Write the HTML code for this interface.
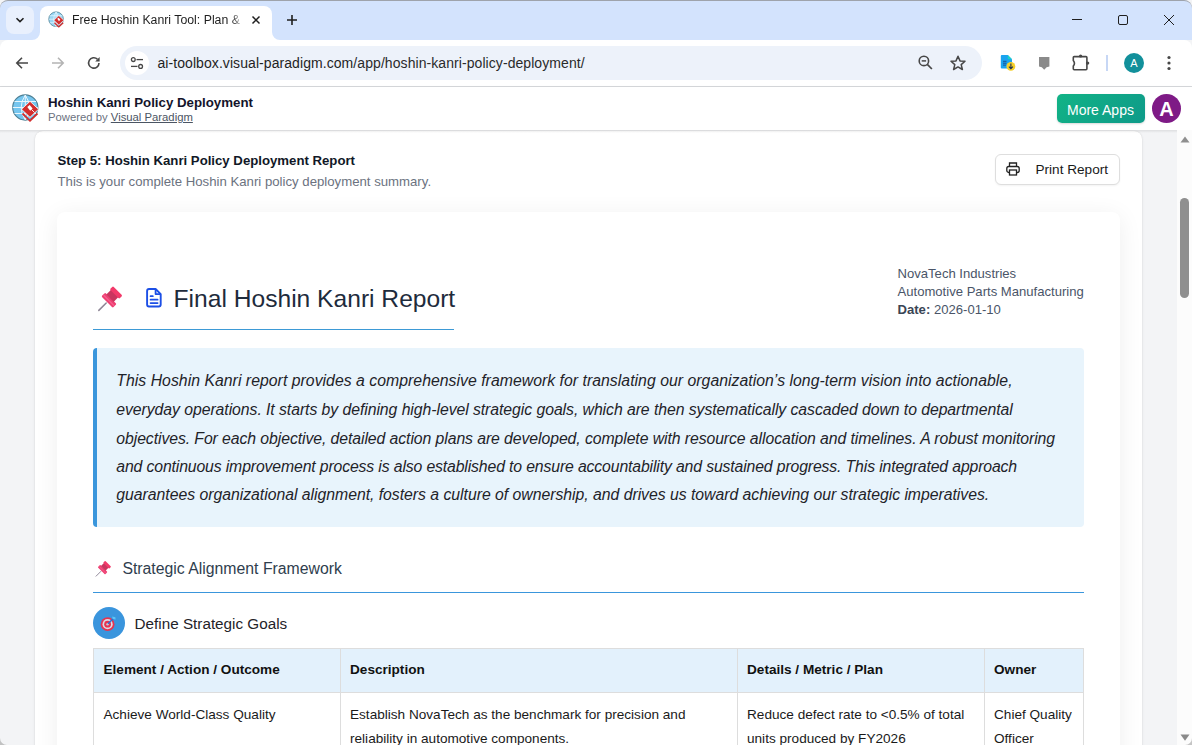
<!DOCTYPE html>
<html><head><meta charset="utf-8">
<style>
*{box-sizing:border-box;margin:0;padding:0}
html,body{width:1192px;height:745px;overflow:hidden;background:#f3f4f6;font-family:"Liberation Sans",sans-serif;position:relative}
.abs{position:absolute}
.t{position:absolute;white-space:nowrap;line-height:1}
/* chrome */
#strip{left:0;top:0;width:1192px;height:40px;background:#d3e3fd;border-top:1px solid #9ea3ab;border-radius:8px 8px 0 0}
#toolbar{left:0;top:40px;width:1192px;height:47px;background:#fff;border-bottom:1px solid #d7d9dc;border-radius:8px 8px 0 0}
#omni{left:120px;top:46px;width:862px;height:34px;background:#edf2fa;border-radius:17px}
#apphdr{left:0;top:87px;width:1192px;height:43px;background:#fff;box-shadow:0 1px 3px rgba(0,0,0,.10)}
#page{left:0;top:130px;width:1177px;height:615px;background:#f3f4f6;overflow:hidden}
#scroll{left:1177px;top:130px;width:15px;height:615px;background:#fcfcfc}
#outer{left:35px;top:1px;width:1107px;height:800px;background:#fff;border-radius:8px;box-shadow:0 1px 3px rgba(0,0,0,.1),0 0 1px rgba(0,0,0,.12)}
#inner{left:22px;top:81px;width:1063px;height:700px;background:#fff;border-radius:8px;box-shadow:0 4px 24px rgba(0,0,0,.07)}
</style></head>
<body>
<div id="strip" class="abs"></div>
<div id="toolbar" class="abs"></div>
<div id="omni" class="abs"></div>

<!-- tab dropdown -->
<div class="abs" style="left:6px;top:6px;width:28px;height:28px;background:#e9f0fd;border-radius:8px"></div>
<svg class="abs" style="left:14px;top:14px" width="12" height="12" viewBox="0 0 12 12"><path d="M2.5 4.2 L6 7.6 L9.5 4.2" fill="none" stroke="#1f1f1f" stroke-width="1.6"/></svg>
<!-- active tab -->
<div class="abs" style="left:40px;top:6px;width:232px;height:35px;background:#fff;border-radius:8px 8px 0 0"></div>
<svg class="abs" style="left:32px;top:32px" width="8" height="8" viewBox="0 0 8 8"><path d="M8 0 V8 H0 A8 8 0 0 0 8 0Z" fill="#fff"/></svg>
<svg class="abs" style="left:272px;top:32px" width="8" height="8" viewBox="0 0 8 8"><path d="M0 0 V8 H8 A8 8 0 0 1 0 0Z" fill="#fff"/></svg>
<!-- favicon -->
<svg class="abs" style="left:45.6px;top:9.3px" width="21" height="21" viewBox="0 0 36 36">
 <circle cx="17.3" cy="17.5" r="12.6" fill="#9ad6f3" stroke="#4d7f93" stroke-width="1.3"/>
 <path d="M4.8 17.5 H29.8 M6.5 11.5 H28 M6.5 23.5 H28 M17.3 5 V30 M17.3 5 Q9 17.5 17.3 30 M17.3 5 Q25.6 17.5 17.3 30" stroke="#e8f6fd" stroke-width="1.2" fill="none"/>
 <path d="M13.5 19.3 L22 11.3 L30.5 19.3 L22 27.3Z" fill="#d32d2d" stroke="#fff" stroke-width="1"/>
 <path d="M14.5 23.5 L22 30.8 L29.5 23.5" fill="none" stroke="#d32d2d" stroke-width="2.2"/>
 <path d="M19.3 16.9 L21.7 15 L24.6 18.4 L22.2 20.8Z" fill="#fff"/>
</svg>
<div class="t" style="left:72px;top:13.7px;font-size:12.3px;color:#1f1f1f;width:172px;overflow:hidden;-webkit-mask-image:linear-gradient(90deg,#000 160px,transparent 172px)">Free Hoshin Kanri Tool: Plan &amp; Execute</div>
<svg class="abs" style="left:251px;top:15px" width="10" height="10" viewBox="0 0 10 10"><path d="M1.5 1.5 L8.5 8.5 M8.5 1.5 L1.5 8.5" stroke="#1f1f1f" stroke-width="1.5"/></svg>
<svg class="abs" style="left:286px;top:14px" width="12" height="12" viewBox="0 0 12 12"><path d="M6 1 V11 M1 6 H11" stroke="#1f1f1f" stroke-width="1.6"/></svg>
<!-- window controls -->
<div class="abs" style="left:1072px;top:18.5px;width:10px;height:1px;background:#1f1f1f"></div>
<div class="abs" style="left:1118px;top:15px;width:10px;height:10px;border:1px solid #1f1f1f;border-radius:2px"></div>
<svg class="abs" style="left:1163px;top:14px" width="12" height="12" viewBox="0 0 12 12"><path d="M1 1 L11 11 M11 1 L1 11" stroke="#1f1f1f" stroke-width="1"/></svg>
<!-- nav buttons -->
<svg class="abs" style="left:14px;top:55px" width="16" height="16" viewBox="0 0 16 16"><path d="M14 8 H3 M8 2.8 L2.8 8 L8 13.2" fill="none" stroke="#474747" stroke-width="1.6"/></svg>
<svg class="abs" style="left:50px;top:55px" width="16" height="16" viewBox="0 0 16 16"><path d="M2 8 H13 M8 2.8 L13.2 8 L8 13.2" fill="none" stroke="#b4b4b4" stroke-width="1.6"/></svg>
<svg class="abs" style="left:86px;top:55px" width="16" height="16" viewBox="0 0 16 16"><path d="M13 8 A5.2 5.2 0 1 1 11.4 4.2" fill="none" stroke="#474747" stroke-width="1.6"/><path d="M13.6 2 V6.4 H9.2Z" fill="#474747"/></svg>
<!-- site info -->
<div class="abs" style="left:125px;top:51px;width:24px;height:24px;background:#fff;border-radius:12px"></div>
<svg class="abs" style="left:129px;top:55px" width="16" height="16" viewBox="0 0 16 16"><circle cx="4.3" cy="4.6" r="1.9" fill="none" stroke="#474747" stroke-width="1.3"/><path d="M7.5 4.6 H14" stroke="#474747" stroke-width="1.3"/><circle cx="11.6" cy="11.4" r="1.9" fill="none" stroke="#474747" stroke-width="1.3"/><path d="M2 11.4 H8.5" stroke="#474747" stroke-width="1.3"/></svg>
<div class="t" style="left:157.5px;top:56px;font-size:14px;color:#1f1f1f;letter-spacing:0.07px">ai-toolbox.visual-paradigm.com<span style="color:#2a2a2a">/app/hoshin-kanri-policy-deployment/</span></div>
<!-- zoom, star -->
<svg class="abs" style="left:917px;top:55px" width="17" height="17" viewBox="0 0 17 17"><circle cx="6.9" cy="5.9" r="4.7" fill="none" stroke="#474747" stroke-width="1.6"/><path d="M4.7 5.9 H9.1" stroke="#474747" stroke-width="1.5"/><path d="M10.3 9.4 L14.9 14" stroke="#474747" stroke-width="1.7"/></svg>
<svg class="abs" style="left:949px;top:54px" width="18" height="18" viewBox="0 0 18 18"><path d="M9 2.2 L11 6.9 L16 7.3 L12.2 10.6 L13.4 15.5 L9 12.9 L4.6 15.5 L5.8 10.6 L2 7.3 L7 6.9Z" fill="none" stroke="#474747" stroke-width="1.5" stroke-linejoin="round"/></svg>
<!-- extensions -->
<svg class="abs" style="left:995px;top:50px" width="22" height="24" viewBox="0 0 22 24"><path d="M6.8 5 H12.8 L17 9.2 V17.5 Q17 18.5 16 18.5 H6.8 Q5.8 18.5 5.8 17.5 V6 Q5.8 5 6.8 5Z" fill="#1aa3ef"/><path d="M12.8 5 L17 9.2 H12.8Z" fill="#19d3c5"/><path d="M8 11.3 H11.5 M8 13.2 H11.5 M8 15.1 H11" stroke="#174a8a" stroke-width="0.9"/><circle cx="15.9" cy="16.4" r="4.4" fill="#f6d02a"/><path d="M15.9 13.4 V18.6 M13.9 16.6 L15.9 18.7 L17.9 16.6" fill="none" stroke="#1f3253" stroke-width="1.1"/></svg>
<svg class="abs" style="left:1036px;top:54px" width="16" height="18" viewBox="0 0 16 18"><path d="M3 3 H13.4 V12.6 L10.6 13.2 L8.2 15.8 L5.8 13.2 L3 12.6Z" fill="#8a8a8a"/></svg>
<svg class="abs" style="left:1070px;top:52px" width="22" height="20" viewBox="0 0 22 20"><path d="M4.2 4.6 H16 Q16.9 4.6 16.9 5.5 V16.8 Q16.9 17.7 16 17.7 H4.2 Q3.3 17.7 3.3 16.8 V14 Q5.6 11.2 3.3 8.4 V5.5 Q3.3 4.6 4.2 4.6Z" fill="none" stroke="#474747" stroke-width="1.6" stroke-linejoin="round"/><circle cx="10.6" cy="4" r="1.6" fill="#474747"/><circle cx="17.6" cy="11.1" r="1.7" fill="#474747"/></svg>
<div class="abs" style="left:1106px;top:55px;width:2px;height:16px;background:#c7d7f5"></div>
<div class="abs" style="left:1124px;top:53px;width:20px;height:20px;border-radius:10px;background:#12909b;color:#fff;font-size:11px;line-height:20px;text-align:center">A</div>
<svg class="abs" style="left:1165px;top:55px" width="8" height="16" viewBox="0 0 8 16"><circle cx="4" cy="2.5" r="1.6" fill="#474747"/><circle cx="4" cy="8" r="1.6" fill="#474747"/><circle cx="4" cy="13.5" r="1.6" fill="#474747"/></svg>

<div id="apphdr" class="abs"></div>

<!-- app header content -->
<svg class="abs" style="left:8px;top:90px" width="36" height="36" viewBox="0 0 36 36">
 <circle cx="17.3" cy="17.5" r="12.6" fill="#76c6ef" stroke="#4d7f93" stroke-width="1.1"/>
 <path d="M4.8 17.5 H29.8 M6.5 11.5 H28 M6.5 23.5 H28 M17.3 5 V30 M17.3 5 Q9 17.5 17.3 30 M17.3 5 Q25.6 17.5 17.3 30" stroke="#e8f6fd" stroke-width="1" fill="none"/>
 <path d="M13.5 19.3 L22 11.3 L30.5 19.3 L22 27.3Z" fill="#d32d2d" stroke="#fff" stroke-width="0.8"/>
 <path d="M14.5 23.5 L22 30.8 L29.5 23.5" fill="none" stroke="#d32d2d" stroke-width="1.8"/>
 <path d="M19.3 16.9 L21.7 15 L24.6 18.4 L22.2 20.8Z" fill="#fff"/>
 <path d="M23.5 19.5 L26.5 22.5" stroke="#fff" stroke-width="0.9"/>
</svg>
<div class="t" style="left:48px;top:95.57px;font-size:13.27px;font-weight:bold;color:#14142b">Hoshin Kanri Policy Deployment</div>
<div class="t" style="left:48px;top:112px;font-size:11.3px;color:#6b7280">Powered by <span style="text-decoration:underline;color:#4b5563">Visual Paradigm</span></div>
<div class="abs" style="left:1057px;top:94px;width:88px;height:29px;border-radius:5px;background:linear-gradient(135deg,#12b386,#0e9a89);box-shadow:0 1px 2px rgba(0,0,0,.15)"></div>
<div class="t" style="left:1067px;top:102.8px;font-size:14px;color:#fff">More Apps</div>
<div class="abs" style="left:1152px;top:94px;width:29px;height:29px;border-radius:50%;background:#7e1a86;color:#fff;font-weight:bold;font-size:20px;line-height:30px;text-align:center">A</div>

<div id="page" class="abs">
  <div id="outer" class="abs">
    <div class="t" style="left:22.5px;top:23px;font-size:13.2px;font-weight:bold;color:#111827">Step 5: Hoshin Kanri Policy Deployment Report</div>
    <div class="t" style="left:22.5px;top:43.8px;font-size:13.2px;color:#6b7280">This is your complete Hoshin Kanri policy deployment summary.</div>
    <div class="abs" style="left:959.5px;top:22.5px;width:125px;height:31px;border:1px solid #dedede;border-radius:6px;background:#fff;box-shadow:0 1px 2px rgba(0,0,0,.05)"></div>
    <svg class="abs" style="left:970px;top:30px" width="16" height="16" viewBox="0 0 16 16"><path d="M4.5 5.5 V2 H11.5 V5.5" fill="none" stroke="#222" stroke-width="1.3"/><rect x="1.8" y="5.5" width="12.4" height="6" rx="2" fill="none" stroke="#222" stroke-width="1.3"/><rect x="4.5" y="9" width="7" height="5" fill="#fff" stroke="#222" stroke-width="1.3"/></svg>
    <div class="t" style="left:1000.5px;top:31.7px;font-size:13.6px;color:#1a1a1a">Print Report</div>

    <div id="inner" class="abs">
    <svg class="abs" style="left:37px;top:70px" width="34" height="34" viewBox="0 0 34 34"><g transform="scale(1)">
 <path d="M4.8 28.4 L12.2 21" stroke="#8d8595" stroke-width="1.5" stroke-linecap="round"/>
 <path d="M8.2 13.6 L10.4 11.4 Q11.2 10.6 12 11.4 L21.8 21.2 Q22.6 22 21.8 22.8 L19.6 25 Q18.8 25.8 18 25 L8.2 15.2 Q7.4 14.4 8.2 13.6Z" fill="#ee3f72"/>
 <path d="M12.3 12.6 L17.6 7.3 L24.9 14.6 L19.6 19.9Z" fill="#c9365f"/>
 <path d="M16.6 6.6 L18.2 5 Q19 4.2 19.8 5 L27.6 12.8 Q28.4 13.6 27.6 14.4 L26 16 Q25.2 16.8 24.4 16 L16.6 8.2 Q15.8 7.4 16.6 6.6Z" fill="#f23a6a"/>
 <path d="M10 13.5 L19.8 23.3" stroke="#f8709a" stroke-width="1.2" stroke-linecap="round" opacity=".7"/>
</g></svg>
    <svg class="abs" style="left:87px;top:74px" width="20" height="24" viewBox="0 0 20 24">
      <path d="M5 3 H11.6 L16.7 8.1 V18.5 Q16.7 20.5 14.7 20.5 H5 Q3.1 20.5 3.1 18.5 V5 Q3.1 3 5 3Z" fill="none" stroke="#1c4fe6" stroke-width="1.9" stroke-linejoin="round"/>
      <path d="M11.6 3.1 V8.1 H16.6" fill="none" stroke="#1c4fe6" stroke-width="1.8" stroke-linejoin="round"/>
      <path d="M6.6 10.2 H8.8 M6.6 13.7 H13.6 M6.6 17.1 H13.6" stroke="#1c4fe6" stroke-width="1.8" stroke-linecap="round"/>
    </svg>
    <div class="t" style="left:116.6px;top:74.78px;font-size:24.6px;color:#1e2b3c">Final Hoshin Kanri Report</div>
    <div class="abs" style="left:36px;top:116.5px;width:361px;height:1.5px;background:#3d9ad6"></div>
    <div class="t" style="left:840.5px;font-size:13.1px;color:#4a5568;line-height:18px;top:53.2px">NovaTech Industries<br>Automotive Parts Manufacturing<br><b style="color:#3a4555">Date:</b> 2026-01-10</div>
    <div class="abs" style="left:36px;top:136px;width:991px;height:179px;background:#e8f4fc;border-left:4px solid #3a96dc;border-radius:4px"></div>
    <div class="t" style="left:59.3px;top:161.23px;font-size:15.8px;font-style:italic;color:#1f2329;letter-spacing:0.028px">This Hoshin Kanri report provides a comprehensive framework for translating our organization’s long-term vision into actionable,</div>
    <div class="t" style="left:59.3px;top:190.43px;font-size:15.8px;font-style:italic;color:#1f2329;letter-spacing:-0.062px">everyday operations. It starts by defining high-level strategic goals, which are then systematically cascaded down to departmental</div>
    <div class="t" style="left:59.3px;top:218.53px;font-size:15.8px;font-style:italic;color:#1f2329;letter-spacing:-0.081px">objectives. For each objective, detailed action plans are developed, complete with resource allocation and timelines. A robust monitoring</div>
    <div class="t" style="left:59.3px;top:247.43px;font-size:15.8px;font-style:italic;color:#1f2329;letter-spacing:-0.139px">and continuous improvement process is also established to ensure accountability and sustained progress. This integrated approach</div>
    <div class="t" style="left:59.3px;top:275.33px;font-size:15.8px;font-style:italic;color:#1f2329;letter-spacing:-0.027px">guarantees organizational alignment, fosters a culture of ownership, and drives us toward achieving our strategic imperatives.</div>
    
    <svg class="abs" style="left:36.2px;top:346px" width="22" height="22" viewBox="0 0 22 22"><g transform="scale(0.64)">
 <path d="M4.8 28.4 L12.2 21" stroke="#8d8595" stroke-width="1.5" stroke-linecap="round"/>
 <path d="M8.2 13.6 L10.4 11.4 Q11.2 10.6 12 11.4 L21.8 21.2 Q22.6 22 21.8 22.8 L19.6 25 Q18.8 25.8 18 25 L8.2 15.2 Q7.4 14.4 8.2 13.6Z" fill="#ee3f72"/>
 <path d="M12.3 12.6 L17.6 7.3 L24.9 14.6 L19.6 19.9Z" fill="#c9365f"/>
 <path d="M16.6 6.6 L18.2 5 Q19 4.2 19.8 5 L27.6 12.8 Q28.4 13.6 27.6 14.4 L26 16 Q25.2 16.8 24.4 16 L16.6 8.2 Q15.8 7.4 16.6 6.6Z" fill="#f23a6a"/>
 <path d="M10 13.5 L19.8 23.3" stroke="#f8709a" stroke-width="1.2" stroke-linecap="round" opacity=".7"/>
</g></svg>
    <div class="t" style="left:65.4px;top:348.9px;font-size:15.8px;color:#2f3e4e">Strategic Alignment Framework</div>
    <div class="abs" style="left:36px;top:380px;width:991px;height:1px;background:#3a96dc"></div>
    <div class="abs" style="left:36px;top:395px;width:32px;height:32px;border-radius:50%;background:#3a95dd"></div>
    <svg class="abs" style="left:43px;top:402px" width="18" height="18" viewBox="0 0 18 18">
      <circle cx="7.6" cy="10.2" r="6.9" fill="#e8334f"/><circle cx="7.6" cy="10.2" r="5.1" fill="#d9dce6"/><circle cx="7.6" cy="10.2" r="3.4" fill="#e8334f"/><circle cx="7.6" cy="10.2" r="1.3" fill="#c7cad3"/>
      <path d="M8 9.8 L13.6 4.2" stroke="#2c6fd6" stroke-width="1.5"/><path d="M12.2 2.4 L12.6 5 L15.6 5.4 L15.4 3.2Z" fill="#5cc6f5"/>
    </svg>
    <div class="t" style="left:77.6px;top:403.59px;font-size:15.25px;color:#1f2329">Define Strategic Goals</div>

    <div class="abs" style="left:36px;top:436px;width:991px;height:45px;background:#e3f1fc"></div>
    <div class="abs" style="left:36px;top:436px;width:991px;height:1px;background:#dddddd"></div>
    <div class="abs" style="left:36px;top:480px;width:991px;height:1px;background:#dddddd"></div>
    <div class="abs" style="left:36px;top:436px;width:1px;height:200px;background:#dddddd"></div>
    <div class="abs" style="left:283px;top:436px;width:1px;height:200px;background:#dddddd"></div>
    <div class="abs" style="left:680px;top:436px;width:1px;height:200px;background:#dddddd"></div>
    <div class="abs" style="left:927px;top:436px;width:1px;height:200px;background:#dddddd"></div>
    <div class="abs" style="left:1026px;top:436px;width:1px;height:200px;background:#dddddd"></div>
    <div class="t" style="left:46.5px;top:451.49px;font-size:13.6px;font-weight:bold;color:#111">Element / Action / Outcome</div>
    <div class="t" style="left:293px;top:451.49px;font-size:13.6px;font-weight:bold;color:#111">Description</div>
    <div class="t" style="left:690px;top:451.49px;font-size:13.6px;font-weight:bold;color:#111">Details / Metric / Plan</div>
    <div class="t" style="left:937px;top:451.49px;font-size:13.6px;font-weight:bold;color:#111">Owner</div>
    <div class="t" style="left:46.5px;top:490.5px;font-size:13.6px;color:#1a1a1a;line-height:24px">Achieve World-Class Quality</div>
    <div class="t" style="left:293px;top:490.5px;font-size:13.6px;color:#1a1a1a;line-height:24px">Establish NovaTech as the benchmark for precision and<br>reliability in automotive components.</div>
    <div class="t" style="left:690px;top:490.5px;font-size:13.6px;color:#1a1a1a;line-height:24px">Reduce defect rate to &lt;0.5% of total<br>units produced by FY2026</div>
    <div class="t" style="left:937px;top:490.5px;font-size:13.6px;color:#1a1a1a;line-height:24px">Chief Quality<br>Officer</div>
    </div>
  </div>
</div>
<div class="abs" style="left:0;top:130px;width:1192px;height:3px;background:linear-gradient(rgba(0,0,0,.09),rgba(0,0,0,0))"></div>
<div id="scroll" class="abs"></div>
<svg class="abs" style="left:1179px;top:134px" width="12" height="10" viewBox="0 0 12 10"><path d="M1.5 8.5 L6 2.5 L10.5 8.5Z" fill="#8f8f8f"/></svg>
<div class="abs" style="left:1180px;top:198px;width:9px;height:100px;border-radius:4.5px;background:#8f8f8f"></div>
<svg class="abs" style="left:1178.7px;top:732.8px" width="12" height="10" viewBox="0 0 12 10"><path d="M1.5 1.5 L6 7.8 L10.5 1.5Z" fill="#8a8a8a"/></svg>
<svg class="abs" style="left:0;top:738px" width="7" height="7" viewBox="0 0 7 7"><path d="M0 0 A7 7 0 0 0 7 7 H0Z" fill="#a0a0a0" opacity=".6"/></svg>
<svg class="abs" style="left:1185px;top:738px" width="7" height="7" viewBox="0 0 7 7"><path d="M7 0 A7 7 0 0 1 0 7 H7Z" fill="#a0a0a0" opacity=".6"/></svg>
</body></html>
